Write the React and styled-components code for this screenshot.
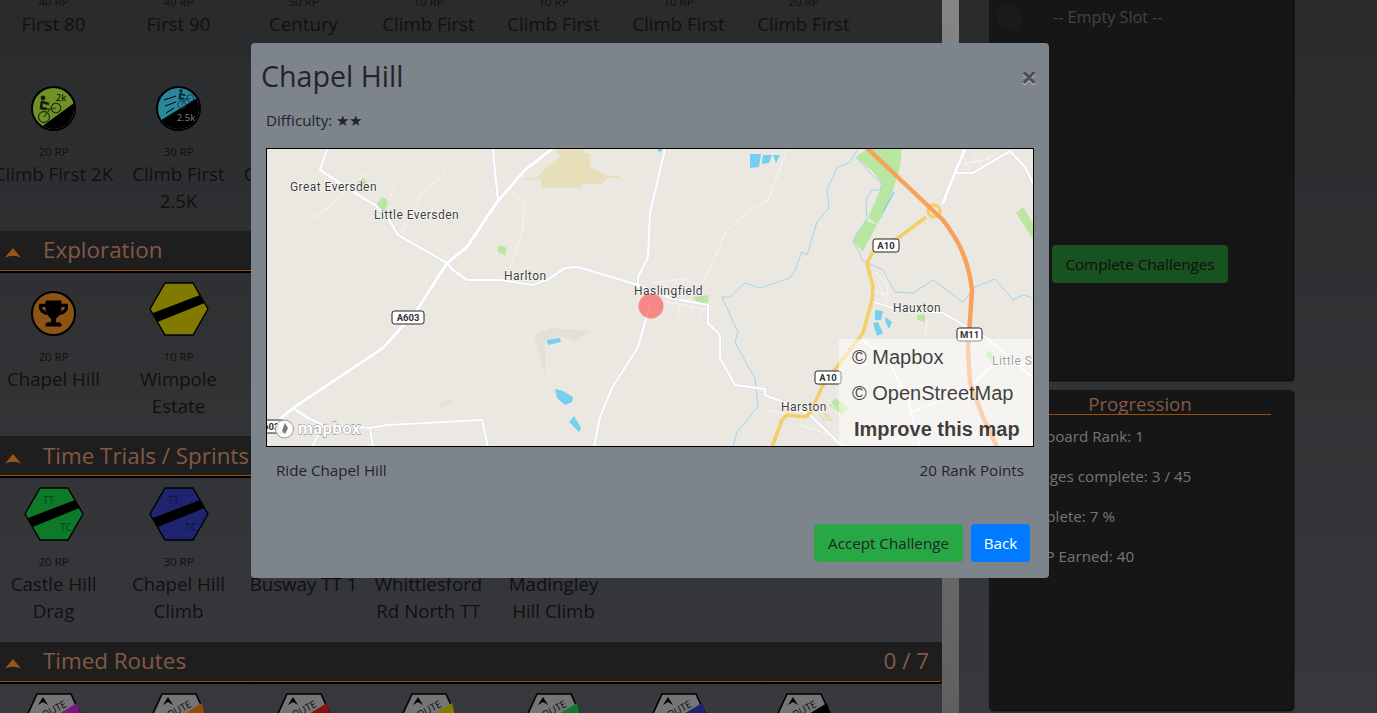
import React from 'react'
import styled, { createGlobalStyle } from 'styled-components'
import { FaTrophy } from 'react-icons/fa'

const FONT = `"Open Sans", "Noto Sans", sans-serif`

const Global = createGlobalStyle`
  html, body { margin: 0; padding: 0; height: 100%; overflow: hidden; }
  body { font-family: ${FONT}; }
`

const Page = styled.div`
  display: flex;
  width: 1377px;
  height: 713px;
  overflow: hidden;
  background: linear-gradient(180deg, #46484b 0%, #5c5f64 100%);
`

const LeftColumn = styled.div`
  width: 942px;
  flex: none;
  overflow: hidden;
`

// the list is scrolled down a bit in the screenshot
const Scrolled = styled.div`
  margin-top: -73px;
`

const Divider = styled.div`
  width: 17px;
  flex: none;
  background: linear-gradient(180deg, #dedede 0%, #a0a0a0 100%);
`

const RightColumn = styled.div`
  flex: none;
  width: 304px;
  margin: -10px 0 0 30px;
  display: flex;
  flex-direction: column;
  gap: 10px;
  padding-bottom: 3px;
`

const Panel = styled.div`
  background: #252525;
  border-radius: 4px;
  box-shadow: 1px 1px 2px #000;
  height: ${p => p.$height}px;
  flex: none;
`

const SlotRow = styled.div`
  display: flex;
  align-items: center;
  height: 34px;
  padding: 10px 0 0 8px;
`

const SlotDot = styled.span`
  width: 25px;
  height: 25px;
  border-radius: 50%;
  background: #2e2e2e;
`

const SlotText = styled.span`
  margin-left: 31px;
  font-size: 16.2px;
  color: #717171;
`

const CompleteButton = styled.button`
  display: block;
  margin: 211px 0 0 63px;
  width: 176px;
  height: 38px;
  padding: 0;
  border: 0;
  border-radius: 4px;
  background: #288938;
  color: #1a1a1a;
  font: 15.2px ${FONT};
`

const ProgressTitle = styled.div`
  margin: 0 22px 0 20px;
  padding-top: 3px;
  height: 21px;
  line-height: 22px;
  text-align: center;
  font-size: 18.7px;
  color: #d99474;
  border-bottom: 1px solid #ff8519;
`

const StatList = styled.div`
  padding: 7px 0 0 8px;
`

const Stat = styled.div`
  height: 40px;
  line-height: 28px;
  font-size: 15.2px;
  color: #c4c4b8;
`

const SectionHeader = styled.div`
  display: flex;
  align-items: center;
  box-sizing: border-box;
  height: 40px;
  padding: 0 13px 1px 5px;
  background: #323232;
  border-bottom: 1px solid #ff8519;
  border-radius: 0 3px 3px 0;
  box-shadow: 0 2px 0 #000, 1px 1px 1px #000;
  color: #d99474;
  font-size: 22.4px;
`

const SectionTitle = styled.span`
  margin-left: 22px;
  flex: 1;
  white-space: nowrap;
`

const ChevronSvg = styled.svg`
  margin-top: 7px;
  flex: none;
`

const Grid = styled.div`
  display: grid;
  grid-template-columns: repeat(7, 125px);
  row-gap: 11.5px;
  margin-left: -9px;
  padding: ${p => (p.$flat ? '0 0 16px' : '11px 0 16.5px')};
`

const Cell = styled.div`
  text-align: center;
`

const IconBox = styled.div`
  height: 54px;
  display: flex;
  align-items: flex-end;
  justify-content: center;
`

const Points = styled.div`
  margin-top: 12px;
  height: 17px;
  line-height: 18px;
  font-size: 11.5px;
  color: #1c1c1c;
`

const Label = styled.div`
  min-height: 55px;
  line-height: 27px;
  font-size: 18.7px;
  color: #1c1c1c;
  white-space: pre-line;
`

const RoundBadge = styled.span`
  position: relative;
  display: inline-flex;
  align-items: center;
  justify-content: center;
  box-sizing: border-box;
  width: 45px;
  height: 45px;
  border-radius: 50%;
  border: 2px solid #000;
  background: ${p => p.$color};
  overflow: hidden;
`

const Backdrop = styled.div`
  position: fixed;
  inset: 0;
  background: rgba(0, 0, 0, 0.4);
`

const Modal = styled.div`
  position: fixed;
  left: 251px;
  top: 43px;
  width: 798px;
  height: 535px;
  box-sizing: border-box;
  display: flex;
  flex-direction: column;
  background: #7e848b;
  border-radius: 4px;
  color: #212529;
`

const ModalHeader = styled.div`
  display: flex;
  align-items: center;
  justify-content: space-between;
  height: 65px;
  padding: 0 12px 0 10px;
`

const ModalTitle = styled.div`
  font-size: 28.6px;
`

const CloseButton = styled.span`
  font-size: 28px;
  font-weight: 700;
  line-height: 1;
  margin-top: 3px;
  color: rgba(0, 0, 0, 0.62);
  text-shadow: 0 1px 0 rgba(255, 255, 255, 0.6);
`

const ModalBody = styled.div`
  flex: 1;
  padding: 0 15px;
`

const Difficulty = styled.div`
  font-size: 15.2px;
  line-height: 25px;
  height: 40px;
`

const MapFrame = styled.div`
  position: relative;
  width: 768px;
  height: 299px;
  box-sizing: border-box;
  border: 1px solid #000;
  overflow: hidden;
  background: #ebe8e1;
`

const MapSvg = styled.svg`
  display: block;
`

const Attribution = styled.div`
  position: absolute;
  right: 0;
  bottom: 0;
  width: 194px;
  height: 107px;
  box-sizing: border-box;
  padding: 0 0 0 13px;
  background: rgba(255, 255, 255, 0.5);
  font-family: "Liberation Sans", Arial, sans-serif;
  font-size: 20px;
  color: rgba(0, 0, 0, 0.75);
`

const AttributionLine = styled.div`
  height: 36px;
  line-height: 36px;
  white-space: nowrap;
  font-weight: ${p => (p.$bold ? 700 : 400)};
  padding-left: ${p => (p.$bold ? 2 : 0)}px;
`

const InfoRow = styled.div`
  display: flex;
  justify-content: space-between;
  padding: 12px 10px 0;
  font-size: 15.2px;
  line-height: 22px;
`

const ModalFooter = styled.div`
  display: flex;
  justify-content: flex-end;
  gap: 8px;
  padding: 0 19px 16px 0;
`

const ModalButton = styled.button`
  width: ${p => p.$width}px;
  height: 38px;
  padding: 0;
  border: 0;
  border-radius: 4px;
  font: 15.2px ${FONT};
  background: ${p => p.$bg};
  color: ${p => p.$fg};
`

// rider on a bike, head at 0,0
const Cyclist = ({ x, y, scale = 1, color, wheel }) => (
  <g transform={`translate(${x} ${y}) scale(${scale})`} fill="none">
    <circle cx="1" cy="19" r="5.5" stroke={wheel} strokeWidth="1.3" />
    <circle cx="13" cy="10" r="4.8" stroke={wheel} strokeWidth="1.3" />
    <path d="M1 19 L7 11 L13 10 M-2 11 L7 11" stroke={wheel} strokeWidth="1.2" />
    <circle cx="0" cy="0" r="2.4" fill={color} />
    <path d="M-1 3 L-2 10 L4 11 M-1 4 L6 6" stroke={color} strokeWidth="2.6" />
  </g>
)

const ClimbBadge = ({ color, text, light, fast }) => (
  <RoundBadge $color={color}>
    <svg width="41" height="41" viewBox="0 0 41 41">
      <polygon points={fast ? '0,34 41,9 41,41 0,41' : '0,45 41,15 41,41'} fill="#000" />
      {fast && <path d="M6 12 L18 8 M7 18 L18 14 M8 25 L16 20" stroke="#000" strokeWidth="1" />}
      {fast
        ? <Cyclist x={23} y={3} scale={0.72} color="#17384a" wheel="#1f5a74" />
        : <Cyclist x={10} y={10} color="#24340e" wheel="#3f5a15" />}
      <text x={28} y={fast ? 33 : 13} fontSize="9.5" textAnchor="middle" fill={light ? '#ccc' : '#000'} fontFamily={FONT}>
        {text}
      </text>
    </svg>
  </RoundBadge>
)

const TrophyBadge = () => (
  <RoundBadge $color="#eb8a23">
    <FaTrophy size={29} color="#000" />
  </RoundBadge>
)

const HEX = '1,27 16,1 44,1 59,27 44,53 16,53'

const HexBadge = ({ color, tt }) => (
  <svg width="60" height="54" viewBox="0 0 60 54">
    <polygon points={HEX} fill={color} stroke="#000" strokeWidth="1.4" />
    <polygon points="4,31 51,13 55.5,21 8.5,40" fill="#000" />
    {tt && (
      <g fontSize="10" fill="#000" fontFamily={FONT} opacity="0.45">
        <text x="19" y="17">TT</text>
        <text x="36" y="44">TC</text>
      </g>
    )}
  </svg>
)

const ROUTE_HEX = '1,27 13,1 47,1 59,27 47,53 13,53'

const RouteBadge = ({ color }) => (
  <svg width="60" height="54" viewBox="0 0 60 54">
    <polygon points={ROUTE_HEX} fill="#c4c4c4" stroke="#000" strokeWidth="1.6" />
    <polygon points="53,10 58,27 47,52 20,52 15,33" fill={color} />
    <path d="M14 12 L19 4 L24 12 L19 9 Z" fill="#000" />
    <text x="29" y="21" fontSize="10" textAnchor="middle" transform="rotate(-28 29 21)" fill="#111" fontFamily={FONT}>ROUTE</text>
  </svg>
)

const SECTIONS = [
  {
    flat: true,
    items: [
      { rp: 40, name: 'First 80' },
      { rp: 40, name: 'First 90' },
      { rp: 50, name: 'Century' },
      { rp: 10, name: 'Climb First' },
      { rp: 10, name: 'Climb First' },
      { rp: 10, name: 'Climb First' },
      { rp: 20, name: 'Climb First' },
      { rp: 20, name: 'Climb First 2K', icon: <ClimbBadge color="#b9f343" text="2k" /> },
      { rp: 30, name: 'Climb First\n2.5K', icon: <ClimbBadge color="#47e1ff" text="2.5k" light fast /> },
      { rp: 40, name: 'Climb First 3K' }
    ]
  },
  {
    title: 'Exploration',
    items: [
      { rp: 20, name: 'Chapel Hill', icon: <TrophyBadge /> },
      { rp: 10, name: 'Wimpole\nEstate', icon: <HexBadge color="#d5cc00" /> }
    ]
  },
  {
    title: 'Time Trials / Sprints',
    items: [
      { rp: 20, name: 'Castle Hill\nDrag', icon: <HexBadge color="#17cc46" tt /> },
      { rp: 30, name: 'Chapel Hill\nClimb', icon: <HexBadge color="#323dbb" tt /> },
      { rp: 20, name: 'Busway TT 1' },
      { rp: 20, name: 'Whittlesford\nRd North TT' },
      { rp: 30, name: 'Madingley\nHill Climb' }
    ]
  },
  {
    title: 'Timed Routes',
    count: '0 / 7',
    items: ['#c02ad0', '#ee7f1e', '#dd2020', '#d5cc00', '#17cc46', '#323dbb', '#000'].map(c => ({
      rp: 30,
      name: 'Route',
      icon: <RouteBadge color={c} />
    }))
  }
]

const Chevron = () => (
  <ChevronSvg width="16" height="10" viewBox="0 0 16 10">
    <path d="M8 0 L16 9.5 Q8 6 0 9.5 Z" fill="#ff8e2f" />
  </ChevronSvg>
)

const WATER = [
  '750,154 761,154 759,167 750,168',
  '763,155 772,155 769,163 762,164',
  '773,155 780,155 776,163',
  '657,149 662,149 660,153',
  '875,310 883,311 881,320 875,320',
  '873,323 878,322 883,333 877,336',
  '885,317 892,322 889,329 886,323',
  '547,340 560,338 561,342 548,345',
  '555,389 563,391 573,397 572,402 565,405 557,398',
  '574,416 581,428 579,432 569,422'
]

const GREEN = [
  '856,157 867,149 902,149 900,167 893,190 882,217 877,224 868,218 880,190 882,183 873,172',
  '865,220 877,225 863,251 853,242',
  '1016,213 1023,207 1033,223 1033,239',
  '376,205 382,197 389,201 385,210 381,212',
  '358,182 363,177 367,182 362,186',
  '498,247 500,245 507,248 505,255 498,252',
  '693,297 709,295 707,305 697,303',
  '917,315 925,315 925,322 917,320',
  '835,398 849,408 842,415 829,405',
  '989,350 995,355 992,362 985,355'
]

const ROADS = [
  // A603
  { d: 'M552 149 L525 170 L497 202 L467 247 L447 263 L417 310 L383 348 L320 390 L293 408 L267 430', w: 3.2 },
  { d: 'M327 149 L320 170 L363 198 L375 205 L388 218 L398 235 L447 263 L453 270 L467 280 L500 280 L532 285 L547 280 L565 268 L578 267 L638 285 L670 298 L708 305 L708 323 L720 335 L720 358 L735 385 L765 389 L765 395 L783 402 L810 415 L843 447', w: 2.2 },
  { d: 'M493 149 L495 173 L498 200', w: 2.2 },
  { d: 'M665 149 L650 213 L648 257 L638 277 L638 287', w: 2.2 },
  { d: 'M650 305 L638 347 L612 388 L600 417 L594 447', w: 2.2 },
  { d: 'M943 203 L952 180 L965 149', w: 3 },
  { d: 'M955 173 L973 173 L1010 151 L1025 167 L1033 183', w: 2.2 },
  { d: 'M873 302 L893 308 L943 313 L967 327 L987 338 L1033 378', w: 1.8 },
  { d: 'M863 340 L890 363 L908 400 L920 447', w: 1.8 },
  { d: 'M910 413 L970 388 L993 365 L1033 365', w: 1.8 },
  { d: 'M293 408 L308 418 L323 425 L370 428 L387 425 L482 420 L488 447', w: 2.2 },
  { d: 'M370 428 L373 447', w: 1.8 },
  { d: 'M323 425 L312 447', w: 1.8 }
]

const MINOR = [
  'M787 150 L768 200 L747 213 L727 230 L703 283',
  'M510 192 L524 202 L523 230 L509 270',
  'M310 220 L328 208 L347 190',
  'M370 172 L358 180',
  'M402 233 L422 193 L430 185 L440 178 L445 170',
  'M395 187 L387 203',
  // top right estate
  'M957 165 L985 160 L997 153 M962 155 L970 170 M972 153 L980 165 M985 152 L990 160',
  // Hauxton estate
  'M875 272 L888 285 L886 305 M878 283 L884 298 M874 292 L888 294',
  // Haslingfield estate
  'M652 283 L690 278 M660 278 L672 295 M675 280 L684 292 M667 302 L712 310 M680 304 L678 316 M692 306 L690 316 M702 308 L700 318',
  // Harston
  'M767 410 L788 415 M825 395 L840 415 M815 405 L830 425 M800 425 L830 435',
  'M927 320 L925 340 L935 345'
]

const RIVERS = [
  'M858 149 L850 162 L837 168 L827 190 L829 208 L817 222 L807 255 L802 252 L795 270 L790 278 L760 288 L745 283 L730 297 L722 297 L738 332 L735 342 L750 370 L755 378 L758 407 L737 432 L733 447',
  'M856 157 L872 175 L882 183 L880 190 L872 190 L866 200 L867 220 L857 233 L853 242 L860 253 L862 260 L883 270 L895 292 L913 293 L933 280 L963 302 L975 287 L995 279 L1013 300 L1023 295 L1033 298'
]

const SHIELDS = [
  { x: 392, y: 311, w: 32, text: 'A603' },
  { x: 873, y: 239, w: 26, text: 'A10' },
  { x: 815, y: 371, w: 26, text: 'A10' },
  { x: 957, y: 328, w: 25, text: 'M11' },
  { x: 252, y: 420, w: 32, text: 'A603' }
]

const PLACES = [
  { x: 290, y: 191, text: 'Great Eversden' },
  { x: 374, y: 219, text: 'Little Eversden' },
  { x: 504, y: 280, text: 'Harlton' },
  { x: 634, y: 295, text: 'Haslingfield' },
  { x: 893, y: 312, text: 'Hauxton' },
  { x: 781, y: 411, text: 'Harston' },
  { x: 992, y: 365, text: 'Little Shelford' }
]

const RouteMap = () => (
  <MapSvg width="766" height="297" viewBox="267 149 766 297">
    <polygon
      points="555,149 583,149 583,153 589,153 590,167 607,176 619,176 619,178 607,178 602,184 582,184 580,188 541,188 541,179 518,180 538,177 545,168 560,157"
      fill="#e6dfb9"
    />
    <polygon points="534,335 550,328 591,331 575,342 560,336 545,343 545,375" fill="#e3e0d6" />
    <polygon points="438,405 450,399 452,402 442,408" fill="#e3e0d6" />
    <polygon points="819,413 828,413 833,421 823,421" fill="#e6dfb9" />
    {GREEN.map(p => <polygon key={p} points={p} fill="#b9e6a0" />)}
    {RIVERS.map(d => <path key={d} d={d} fill="none" stroke="#a4d4f0" strokeWidth="1" />)}
    <path d="M894 192 L883 212" stroke="#75cff0" strokeWidth="1.5" />
    {WATER.map(p => <polygon key={p} points={p} fill="#75cff0" />)}
    {MINOR.map(d => <path key={d} d={d} fill="none" stroke="#f8f7f3" strokeWidth="0.9" />)}
    <g fill="none" strokeLinejoin="round" strokeLinecap="round">
      {ROADS.map(r => <path key={r.d} d={r.d} stroke="#dcdcea" strokeWidth={r.w + 1} />)}
      {ROADS.map(r => <path key={r.d} d={r.d} stroke="#fff" strokeWidth={r.w} />)}
      <path d="M772 447 L782 420 L787 415 L805 417 L810 413 L823 385 L863 333 L872 300 L873 287 L867 263 L873 252 L898 238 L925 218" stroke="#f4ce66" strokeWidth="3.6" />
      <circle cx="934" cy="211" r="6" stroke="#f4ce66" strokeWidth="3.2" />
      <path d="M868 149 L943 220 C955 236 968 255 972 290 L968 350 L970 383 L983 417 L997 447" stroke="#f9a05a" strokeWidth="4.4" />
    </g>
    {SHIELDS.map(s => (
      <g key={s.x}>
        <rect x={s.x} y={s.y} width={s.w} height="13" rx="2.5" fill="#fff" stroke="#222" />
        <text x={s.x + s.w / 2} y={s.y + 10} fontSize="9.5" fontWeight="700" textAnchor="middle" fill="#333" fontFamily="Roboto, sans-serif">{s.text}</text>
      </g>
    ))}
    {PLACES.map(p => (
      <text key={p.text} x={p.x} y={p.y} fontSize="12" fill="#3c3c3c" letterSpacing="0.45" stroke="#fff" strokeWidth="1.2" paintOrder="stroke" fontFamily="Roboto, sans-serif">{p.text}</text>
    ))}
    <circle cx="651" cy="306" r="12.5" fill="#ff3b3b" fillOpacity="0.55" />
    <circle cx="284.5" cy="429" r="9" fill="#fff" fillOpacity="0.85" stroke="#999" strokeWidth="1" />
    <path d="M285 423 L288 428 L285 434 L282 431 Z" fill="#777" />
    <text x="298" y="434" fontSize="17" fontWeight="700" letterSpacing="0.3" fill="#fff" stroke="#777" strokeWidth="0.8" paintOrder="stroke" fontFamily="Roboto, sans-serif">mapbox</text>
  </MapSvg>
)

export default function App() {
  return (
    <>
      <Global />
      <Page>
        <LeftColumn>
          <Scrolled>
            {SECTIONS.map((section, i) => (
              <div key={i}>
                {section.title && (
                  <SectionHeader>
                    <Chevron />
                    <SectionTitle>{section.title}</SectionTitle>
                    {section.count && <span>{section.count}</span>}
                  </SectionHeader>
                )}
                <Grid $flat={section.flat}>
                  {section.items.map((item, j) => (
                    <Cell key={j}>
                      <IconBox>{item.icon}</IconBox>
                      <Points>{item.rp} RP</Points>
                      <Label>{item.name}</Label>
                    </Cell>
                  ))}
                </Grid>
              </div>
            ))}
          </Scrolled>
        </LeftColumn>
        <Divider />
        <RightColumn>
          <Panel $height={390}>
            <SlotRow>
              <SlotDot />
              <SlotText>-- Empty Slot --</SlotText>
            </SlotRow>
            <CompleteButton>Complete Challenges</CompleteButton>
          </Panel>
          <Panel $height={320}>
            <ProgressTitle>Progression</ProgressTitle>
            <StatList>
              <Stat>Leaderboard Rank: 1</Stat>
              <Stat>Challenges complete: 3 / 45</Stat>
              <Stat>% Complete: 7 %</Stat>
              <Stat>Total RP Earned: 40</Stat>
            </StatList>
          </Panel>
        </RightColumn>
      </Page>
      <Backdrop />
      <Modal>
        <ModalHeader>
          <ModalTitle>Chapel Hill</ModalTitle>
          <CloseButton>×</CloseButton>
        </ModalHeader>
        <ModalBody>
          <Difficulty>Difficulty: ★★</Difficulty>
          <MapFrame>
            <RouteMap />
            <Attribution>
              <AttributionLine>© Mapbox</AttributionLine>
              <AttributionLine>© OpenStreetMap</AttributionLine>
              <AttributionLine $bold>Improve this map</AttributionLine>
            </Attribution>
          </MapFrame>
          <InfoRow>
            <span>Ride Chapel Hill</span>
            <span>20 Rank Points</span>
          </InfoRow>
        </ModalBody>
        <ModalFooter>
          <ModalButton $width={149} $bg="#28a745" $fg="#212529">Accept Challenge</ModalButton>
          <ModalButton $width={59} $bg="#007bff" $fg="#fff">Back</ModalButton>
        </ModalFooter>
      </Modal>
    </>
  )
}
